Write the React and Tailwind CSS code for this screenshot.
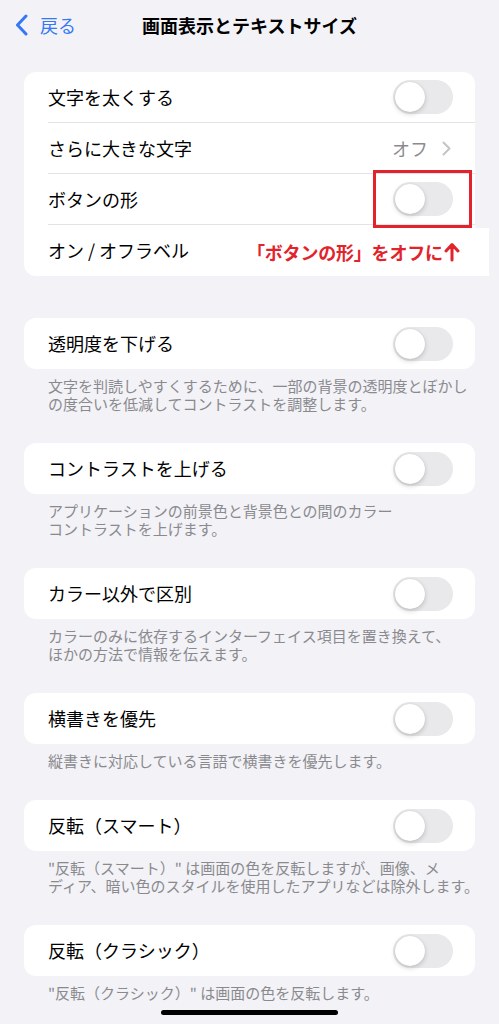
const rows = [
  {
    label: "透明度を下げる",
    note: ["文字を判読しやすくするために、一部の背景の透明度とぼかし", "の度合いを低減してコントラストを調整します。"],
  },
  {
    label: "コントラストを上げる",
    note: ["アプリケーションの前景色と背景色との間のカラー", "コントラストを上げます。"],
  },
  {
    label: "カラー以外で区別",
    note: ["カラーのみに依存するインターフェイス項目を置き換えて、", "ほかの方法で情報を伝えます。"],
  },
  {
    label: "横書きを優先",
    note: ["縦書きに対応している言語で横書きを優先します。"],
  },
  {
    label: "反転（スマート）",
    note: ["\"反転（スマート）\" は画面の色を反転しますが、画像、メ", "ディア、暗い色のスタイルを使用したアプリなどは除外します。"],
  },
  {
    label: "反転（クラシック）",
    note: ["\"反転（クラシック）\" は画面の色を反転します。"],
  },
];

function Toggle() {
  return (
    <div className="flex h-[34px] w-[60px] shrink-0 items-center rounded-full bg-[#e9e9eb] px-[2px]">
      <div className="h-[30px] w-[30px] rounded-full bg-white shadow-[0_2px_5px_rgba(0,0,0,0.18),0_0_1px_rgba(0,0,0,0.15)]" />
    </div>
  );
}

function Row({ label, last, children }) {
  return (
    <div className="pl-6">
      <div className={`flex h-[51px] items-center justify-between pr-[22px] ${last ? "" : "border-b border-[#e3e3e8]"}`}>
        <span className="text-[18px] text-black">{label}</span>
        {children}
      </div>
    </div>
  );
}

export default function App() {
  return (
    <div className="relative h-[1024px] overflow-hidden bg-[#f2f2f7] font-['Noto_Sans_CJK_JP','Noto_Sans',sans-serif]">
      <div className="grid h-[50px] grid-cols-[1fr_auto_1fr] items-center">
        <div className="flex items-center gap-[12px] pl-[15px] text-[#3478f6]">
          <svg width="13" height="22" viewBox="0 0 13 22" fill="none">
            <path d="M11 2 L2.5 11 L11 20" stroke="currentColor" strokeWidth="3" strokeLinecap="round" strokeLinejoin="round" />
          </svg>
          <span className="text-[18px]">戻る</span>
        </div>
        <h1 className="text-[18px] font-semibold text-black">画面表示とテキストサイズ</h1>
        <div />
      </div>

      <div className="px-6 pt-[22px]">
        <div className="relative rounded-xl bg-white">
          <Row label="文字を太くする">
            <Toggle />
          </Row>
          <Row label="さらに大きな文字">
            <div className="flex items-center gap-[14px] pr-[2px]">
              <span className="text-[18px] text-[#8a8a8e]">オフ</span>
              <svg width="9" height="15" viewBox="0 0 9 15" fill="none">
                <path d="M1.5 1.5 L7.5 7.5 L1.5 13.5" stroke="#c4c4c7" strokeWidth="2" strokeLinecap="round" strokeLinejoin="round" />
              </svg>
            </div>
          </Row>
          <Row label="ボタンの形">
            <Toggle />
          </Row>
          <Row label="オン / オフラベル" last />

          <div className="absolute left-[349px] top-[98px] h-[58px] w-[99px] border-[3px] border-[#e3232b]" />
          <div className="absolute left-[221px] top-[156px] flex h-[48px] w-[244px] items-center bg-white pl-[2px]">
            <span className="text-[18px] font-bold tracking-[-0.2px] text-[#e3232b]">「ボタンの形」をオフに</span>
            <svg width="16" height="20" viewBox="0 0 16 20" fill="none" className="ml-[1px]">
              <path d="M8 18 V3 M2 9 L8 2.5 L14 9" stroke="#e3232b" strokeWidth="3" strokeLinecap="round" strokeLinejoin="round" />
            </svg>
          </div>
        </div>

        <div className="mt-[42px]">
          {rows.map((item) => (
            <div key={item.label}>
              <div className="rounded-xl bg-white">
                <Row label={item.label} last>
                  <Toggle />
                </Row>
              </div>
              <div className="whitespace-nowrap px-6 pb-[30px] pt-[8px] text-[15px] leading-[18px] text-[#8a8a8e]">
                {item.note.map((line) => (
                  <div key={line}>{line}</div>
                ))}
              </div>
            </div>
          ))}
        </div>
      </div>

      <div className="absolute bottom-[9px] left-[161px] h-[5px] w-[177px] rounded-full bg-black" />
    </div>
  );
}
